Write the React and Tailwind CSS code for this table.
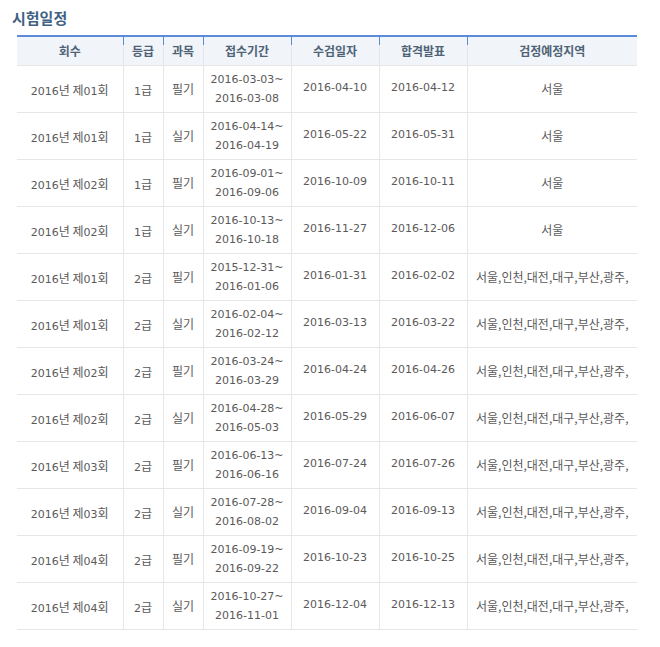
const rows = [
  ["2016년 제01회", "1급", "필기", "2016-03-03~", "2016-03-08", "2016-04-10", "2016-04-12", "서울"],
  ["2016년 제01회", "1급", "실기", "2016-04-14~", "2016-04-19", "2016-05-22", "2016-05-31", "서울"],
  ["2016년 제02회", "1급", "필기", "2016-09-01~", "2016-09-06", "2016-10-09", "2016-10-11", "서울"],
  ["2016년 제02회", "1급", "실기", "2016-10-13~", "2016-10-18", "2016-11-27", "2016-12-06", "서울"],
  ["2016년 제01회", "2급", "필기", "2015-12-31~", "2016-01-06", "2016-01-31", "2016-02-02", "서울,인천,대전,대구,부산,광주,"],
  ["2016년 제01회", "2급", "실기", "2016-02-04~", "2016-02-12", "2016-03-13", "2016-03-22", "서울,인천,대전,대구,부산,광주,"],
  ["2016년 제02회", "2급", "필기", "2016-03-24~", "2016-03-29", "2016-04-24", "2016-04-26", "서울,인천,대전,대구,부산,광주,"],
  ["2016년 제02회", "2급", "실기", "2016-04-28~", "2016-05-03", "2016-05-29", "2016-06-07", "서울,인천,대전,대구,부산,광주,"],
  ["2016년 제03회", "2급", "필기", "2016-06-13~", "2016-06-16", "2016-07-24", "2016-07-26", "서울,인천,대전,대구,부산,광주,"],
  ["2016년 제03회", "2급", "실기", "2016-07-28~", "2016-08-02", "2016-09-04", "2016-09-13", "서울,인천,대전,대구,부산,광주,"],
  ["2016년 제04회", "2급", "필기", "2016-09-19~", "2016-09-22", "2016-10-23", "2016-10-25", "서울,인천,대전,대구,부산,광주,"],
  ["2016년 제04회", "2급", "실기", "2016-10-27~", "2016-11-01", "2016-12-04", "2016-12-13", "서울,인천,대전,대구,부산,광주,"],
];

const heads = ["회수", "등급", "과목", "접수기간", "수검일자", "합격발표", "검정예정지역"];
const widths = ["w-[106px]", "w-[40px]", "w-[40px]", "w-[88px]", "w-[88px]", "w-[88px]", "w-[170px]"];

const kr = "font-['Noto_Sans_CJK_KR',sans-serif]";
const num = "font-['DejaVu_Sans','Noto_Sans_CJK_KR',sans-serif]";

const Schedule = () => {
    return (
        <div className="bg-white w-[660px] h-[647px] pt-[8px] pl-[12px]">
            <h2 className={`${kr} text-[15px] font-bold text-[#3f6284] leading-[20px]`}>시험일정</h2>
            <table className="mt-[7px] ml-[5px] w-[620px] table-fixed border-collapse border-t-2 border-[#5b8ad6] text-[#5a5a5a]">
                <thead>
                    <tr className="bg-[#f1f4f8] h-[29px]">
                        {heads.map((h, i) => (
                            <th key={h} className={`${widths[i]} relative border-b border-[#e6e6e6] ${i > 0 ? "border-l" : ""} ${kr} text-[12px] font-bold text-[#4e6377] p-0`}>
                                {i > 0 && <span className="absolute left-[-1px] top-0 w-px h-[8px] bg-[#5b8ad6]"></span>}
                                {h}
                            </th>
                        ))}
                    </tr>
                </thead>
                <tbody>
                    {rows.map((r, idx) => (
                        <tr key={idx} className="h-[47px]">
                            <td className="border-b border-[#e6e6e6] text-center p-0">
                                <span className={`${num} text-[11px]`}>2016</span>
                                <span className={`${kr} text-[12px]`}>{"년 제"}</span>
                                <span className={`${num} text-[11px]`}>{r[0].slice(7, 9)}</span>
                                <span className={`${kr} text-[12px]`}>회</span>
                            </td>
                            <td className="border-b border-l border-[#e6e6e6] text-center p-0">
                                <span className={`${num} text-[11px]`}>{r[1][0]}</span>
                                <span className={`${kr} text-[12px]`}>급</span>
                            </td>
                            <td className={`border-b border-l border-[#e6e6e6] text-center p-0 ${kr} text-[12px]`}>{r[2]}</td>
                            <td className={`border-b border-l border-[#e6e6e6] text-center p-0 ${num} text-[11px] leading-[19px]`}>
                                <div>{r[3]}</div>
                                <div>{r[4]}</div>
                            </td>
                            <td className={`border-b border-l border-[#e6e6e6] text-center p-0 ${num} text-[11px]`}>{r[5]}</td>
                            <td className={`border-b border-l border-[#e6e6e6] text-center p-0 ${num} text-[11px]`}>{r[6]}</td>
                            <td className={`border-b border-l border-[#e6e6e6] p-0 ${kr} text-[12px]`}>
                                <div className="overflow-hidden whitespace-nowrap text-center">{r[7]}</div>
                            </td>
                        </tr>
                    ))}
                </tbody>
            </table>
        </div>
    );
};

export default function App() {
    return <Schedule />;
}
